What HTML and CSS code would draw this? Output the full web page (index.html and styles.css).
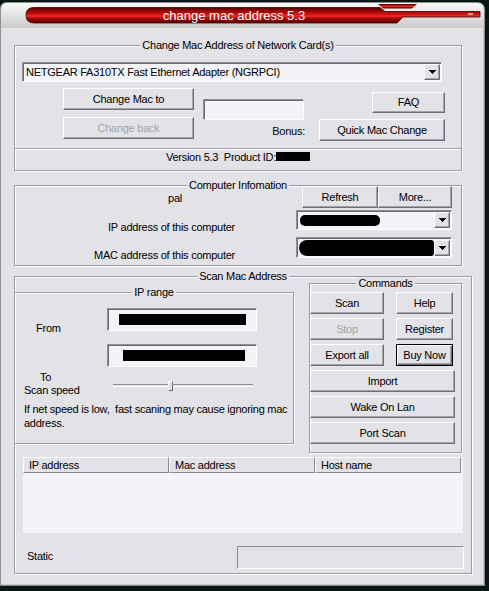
FILE: index.html
```html
<!DOCTYPE html>
<html lang="en">
<head>
    <meta charset="UTF-8">
    <title>change mac address 5.3</title>
    <link rel="stylesheet" href="styles.css">
</head>
<body>

    <div class="window">
        <!-- skinned caption bar -->
        <svg class="caption" width="485" height="28" viewBox="0 0 485 28">
            <defs>
                <linearGradient id="frame" x1="0" y1="0" x2="0" y2="1">
                    <stop offset="0" stop-color="#fafafa"/>
                    <stop offset="0.45" stop-color="#e4e4e4"/>
                    <stop offset="1" stop-color="#cbcbcb"/>
                </linearGradient>
                <linearGradient id="bar" x1="0" y1="0" x2="0" y2="1">
                    <stop offset="0" stop-color="#4a0000"/>
                    <stop offset="0.18" stop-color="#8e0303"/>
                    <stop offset="0.46" stop-color="#d41414"/>
                    <stop offset="0.55" stop-color="#ee3030"/>
                    <stop offset="0.68" stop-color="#b00808"/>
                    <stop offset="1" stop-color="#520000"/>
                </linearGradient>
            </defs>
            <path d="M0.5 28V9Q0.5 2.5 7 2.5H477Q484.5 2.5 484.5 10V28" fill="url(#frame)" stroke="#8e8e8e"/>
            <path d="M378 4H417L412 8.5H383Z" fill="url(#bar)"/>
            <path d="M34 7.5H380L385 11.5H480V17H403L397 23H34Q26 23 26 15Q26 7.5 34 7.5Z" fill="url(#bar)" stroke="#3c0000" stroke-width="0.8"/>
            <rect x="468" y="13" width="5" height="2" fill="#f29a9a"/>
            <text class="caption-text" x="234" y="19.5" text-anchor="middle">change mac address 5.3</text>
        </svg>

        <div class="client">
            <!-- network card -->
            <div class="group card">
                <div class="group-title">Change Mac Address of Network Card(s)</div>
                <div class="combo card-combo">
                    <span>NETGEAR FA310TX Fast Ethernet Adapter (NGRPCI)</span>
                    <span class="drop"><svg width="7" height="4" shape-rendering="crispEdges"><path d="M0 0h7v1h-1v1h-1v1h-1v1h-1v-1h-1v-1h-1v-1h-1z"/></svg></span>
                </div>
                <div class="card-row">
                    <div class="col-change">
                        <button class="btn">Change Mac to</button>
                        <button class="btn" disabled>Change back</button>
                    </div>
                    <div class="col-new">
                        <input class="edit new-mac" type="text">
                        <div class="bonus">Bonus:</div>
                    </div>
                    <div class="col-extra">
                        <button class="btn faq">FAQ</button>
                        <button class="btn quick">Quick Mac Change</button>
                    </div>
                </div>
                <div class="version">Version 5.3&nbsp; Product ID:<span class="redact pid"></span></div>
            </div>

            <!-- this computer -->
            <div class="group info">
                <div class="group-title">Computer Infomation</div>
                <div class="info-body">
                    <div class="info-labels">
                        <div class="host">pal</div>
                        <div class="ip-label">IP address of this computer</div>
                        <div class="mac-label">MAC address of this computer</div>
                    </div>
                    <div class="info-controls">
                        <div class="btn-row">
                            <button class="btn refresh">Refresh</button>
                            <button class="btn more">More...</button>
                        </div>
                        <div class="combo ip-combo">
                            <span class="redact r-ip"></span>
                            <span class="drop"><svg width="7" height="4" shape-rendering="crispEdges"><path d="M0 0h7v1h-1v1h-1v1h-1v1h-1v-1h-1v-1h-1v-1h-1z"/></svg></span>
                        </div>
                        <div class="combo mac-combo">
                            <span class="redact r-mac"></span>
                            <span class="drop"><svg width="7" height="4" shape-rendering="crispEdges"><path d="M0 0h7v1h-1v1h-1v1h-1v1h-1v-1h-1v-1h-1v-1h-1z"/></svg></span>
                        </div>
                    </div>
                </div>
            </div>

            <!-- scanner -->
            <div class="group scan">
                <div class="group-title">Scan Mac Address</div>
                <div class="scan-top">
                    <div class="group range">
                        <div class="group-title">IP range</div>
                        <div class="range-rows">
                            <div class="from">From</div>
                            <div class="range-edits">
                                <div class="edit"><span class="redact r-from"></span></div>
                                <div class="edit"><span class="redact r-to"></span></div>
                            </div>
                        </div>
                        <div class="speed-row">
                            <div class="speed-labels">
                                <div class="to">To</div>
                                <div>Scan speed</div>
                            </div>
                            <div class="slider">
                                <div class="track"></div>
                                <div class="thumb"></div>
                            </div>
                        </div>
                        <p class="hint">If net speed is low,&nbsp; fast scaning may cause ignoring mac address.</p>
                    </div>

                    <div class="group commands">
                        <div class="group-title">Commands</div>
                        <div class="cmd-list">
                            <div class="cmd-pair">
                                <button class="btn cmd-left">Scan</button>
                                <button class="btn cmd-right">Help</button>
                            </div>
                            <div class="cmd-pair">
                                <button class="btn cmd-left" disabled>Stop</button>
                                <button class="btn cmd-right">Register</button>
                            </div>
                            <div class="cmd-pair">
                                <button class="btn cmd-left">Export all</button>
                                <button class="btn cmd-right default">Buy Now</button>
                            </div>
                            <button class="btn cmd-wide">Import</button>
                            <button class="btn cmd-wide">Wake On Lan</button>
                            <button class="btn cmd-wide">Port Scan</button>
                        </div>
                    </div>
                </div>

                <div class="list">
                    <div class="list-head">
                        <div>IP address</div>
                        <div>Mac address</div>
                        <div>Host name</div>
                    </div>
                </div>

                <div class="status">
                    <span class="status-label">Static</span>
                    <div class="status-box"></div>
                </div>
            </div>
        </div>
    </div>

</body>
</html>
```

FILE: styles.css
```css
* {
    box-sizing: border-box;
}

body {
    margin: 0;
    background: #0b1714;
    font-family: "Liberation Sans", Arial, sans-serif;
    font-size: 11px;
    line-height: 13px;
    letter-spacing: -0.25px;
    color: #000;
}

/* Ventana */
.window {
    width: 485px;
    height: 586px;
}

.caption {
    display: block;
}

.caption-text {
    fill: #fff;
    font-size: 13px;
    letter-spacing: 0;
}

.client {
    height: 558px;
    padding: 17px 0 0 14px;
    background: #e3e2e7;
    box-shadow: inset 1px 0 #8f8f93, inset -1px -1px #858489, inset -2px -2px #c9c8cc;
}

/* Group boxes (etched frame + centred title) */
.group {
    display: flex;
    flex-direction: column;
    align-items: flex-start;
    border: 1px solid #9c9ba0;
    box-shadow: 1px 1px 0 #fff, inset 1px 1px 0 #fff;
}

.group-title {
    align-self: center;
    margin: -7px 0 -6px;
    padding: 0 2px;
    background: #e3e2e7;
}

/* Controls */
.btn {
    display: block;
    height: 22px;
    padding: 0;
    font: inherit;
    letter-spacing: inherit;
    color: #000;
    text-align: center;
    background: #e3e2e7;
    border: 1px solid;
    border-color: #fff #6f6e73 #6f6e73 #fff;
    box-shadow: inset -1px -1px 0 #a3a2a7;
}

.btn:disabled {
    color: #a3a2a7;
}

.btn.default {
    border-color: #000;
    box-shadow: inset 1px 1px 0 #fff, inset -1px -1px 0 #6f6e73, inset -2px -2px 0 #a3a2a7;
}

.combo, .edit {
    display: flex;
    align-items: center;
    background: #f4f3f7;
    border: 1px solid;
    border-color: #8f8e93 #fff #fff #8f8e93;
    box-shadow: inset 1px 1px 0 #6c6b70;
}

.combo {
    padding: 0 1px 0 3px;
}

.drop {
    display: flex;
    align-items: center;
    justify-content: center;
    width: 16px;
    height: 16px;
    margin-left: auto;
    background: #e3e2e7;
    border: 1px solid;
    border-color: #fff #6f6e73 #6f6e73 #fff;
    box-shadow: inset -1px -1px 0 #a3a2a7;
}

.drop svg {
    display: block;
}

.redact {
    display: inline-block;
    background: #000;
}

/* Change Mac Address of Network Card(s) */
.card {
    width: 448px;
    height: 126px;
}

.card-combo {
    width: 420px;
    height: 20px;
    margin: 16px 0 0 7px;
}

.card-row {
    display: flex;
    margin-top: 6px;
}

.col-change {
    display: flex;
    flex-direction: column;
    gap: 7px;
    width: 131px;
    margin-left: 48px;
}

.col-new {
    width: 102px;
    margin-left: 9px;
    padding-top: 11px;
}

.new-mac {
    width: 101px;
    height: 21px;
    padding: 0;
    font: inherit;
    outline: none;
}

.bonus {
    margin-top: 5px;
    text-align: right;
}

.col-extra {
    display: flex;
    flex-direction: column;
    align-items: flex-end;
    width: 126px;
    margin-left: 14px;
}

.faq {
    width: 73px;
    height: 21px;
    margin-top: 4px;
}

.quick {
    width: 126px;
    margin-top: 6px;
}

.version {
    width: 446px;
    height: 22px;
    margin-top: 7px;
    padding-top: 2px;
    text-align: center;
    border-top: 1px solid #a09fa4;
    box-shadow: inset 0 1px 0 #fff;
}

.pid {
    width: 34px;
    height: 9px;
}

/* Computer Infomation */
.info {
    width: 448px;
    height: 81px;
    margin-top: 14px;
}

.info-body {
    display: flex;
}

.info-labels {
    display: flex;
    flex-direction: column;
    align-items: flex-end;
    width: 220px;
}

.host {
    margin: 6px 53px 0 0;
}

.ip-label {
    margin-top: 16px;
}

.mac-label {
    margin-top: 15px;
}

.info-controls {
    width: 156px;
    margin-left: 61px;
}

.btn-row {
    display: flex;
    justify-content: flex-end;
}

.refresh {
    width: 76px;
}

.more {
    width: 74px;
}

.ip-combo {
    height: 20px;
    margin-top: 2px;
}

.mac-combo {
    height: 21px;
    margin-top: 7px;
}

.r-ip {
    width: 80px;
    height: 11px;
    border-radius: 5px;
}

.r-mac {
    width: 137px;
    height: 16px;
    margin-left: -1px;
    border-radius: 8px 3px 3px 8px;
}

/* Scan Mac Address */
.scan {
    width: 458px;
    height: 298px;
    margin-top: 10px;
}

.scan-top {
    display: flex;
    align-items: flex-start;
}

.range {
    width: 280px;
    height: 152px;
    margin: 15px 0 0 -1px;
}

.range-rows {
    display: flex;
}

.from {
    width: 92px;
    padding: 29px 0 0 21px;
}

.range-edits {
    display: flex;
    flex-direction: column;
    gap: 13px;
    padding-top: 15px;
}

.range-edits .edit {
    width: 150px;
    height: 23px;
}

.r-from {
    width: 127px;
    height: 11px;
    margin-left: 11px;
}

.r-to {
    width: 122px;
    height: 11px;
    margin-left: 15px;
}

.speed-row {
    display: flex;
    margin-top: 4px;
}

.speed-labels {
    width: 98px;
    padding-left: 9px;
}

.speed-labels .to {
    padding-left: 16px;
}

.slider {
    position: relative;
    width: 140px;
    height: 26px;
}

.track {
    margin-top: 13px;
    height: 3px;
    border-top: 1px solid #8f8e93;
    border-bottom: 1px solid #fff;
}

.thumb {
    position: absolute;
    left: 55px;
    top: 10px;
    width: 5px;
    height: 10px;
    background: #e3e2e7;
    border: 1px solid;
    border-color: #fff #6f6e73 #6f6e73 #fff;
}

.hint {
    width: 268px;
    margin: 5px 0 0 9px;
    line-height: 14px;
}

.commands {
    width: 153px;
    height: 170px;
    margin: 6px 0 0 15px;
}

.cmd-list {
    display: flex;
    flex-direction: column;
    gap: 4px;
    padding-top: 8px;
}

.cmd-pair {
    display: flex;
    gap: 12px;
}

.cmd-left {
    width: 74px;
}

.cmd-right {
    width: 57px;
}

.cmd-wide {
    width: 145px;
}

.list {
    width: 440px;
    height: 76px;
    margin: 4px 0 0 8px;
    background: #f4f3f7;
}

.list-head {
    display: flex;
}

.list-head div {
    width: 146px;
    height: 16px;
    padding: 1px 0 0 5px;
    border: 1px solid;
    border-color: #fff #8c8b90 #8c8b90 #fff;
    background: #e3e2e7;
}

.status {
    display: flex;
    align-self: stretch;
    height: 23px;
    margin-top: 13px;
}

.status-label {
    margin-left: 12px;
    padding-top: 4px;
}

.status-box {
    width: 227px;
    margin: 0 7px 0 auto;
    border: 1px solid;
    border-color: #8f8e93 #fff #fff #8f8e93;
}
```
